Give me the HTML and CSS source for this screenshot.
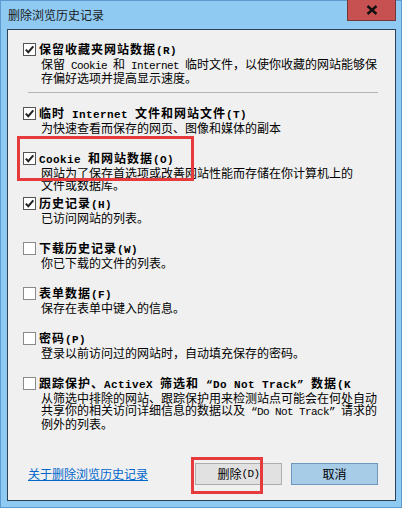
FILE: index.html
```html
<!DOCTYPE html>
<html lang="zh-CN">
<head>
<meta charset="utf-8">
<title>删除浏览历史记录</title>
<link rel="stylesheet" href="styles.css">
</head>
<body>
<div class="window">
  <div class="titlebar">
    <span class="title">删除浏览历史记录</span>
    <div class="close"><svg width="12" height="10" viewBox="0 0 12 10"><path d="M1.5 1 L10.5 9 M10.5 1 L1.5 9" stroke="#111" stroke-width="2.4" fill="none"/></svg></div>
  </div>
  <div class="client">
    <div class="options">
      <div class="item first">
        <span class="cb"><svg width="11" height="11" viewBox="0 0 11 11"><path d="M1.8 5.6 L4.3 8.2 L9.3 2.4" stroke="#222" stroke-width="2" fill="none"/></svg></span>
        <div class="text">
          <div class="label">保留收藏夹网站数据<span class="m">(R)</span></div>
          <div class="desc">保留<span class="m"> Cookie </span>和<span class="m"> Internet </span>临时文件，以使你收藏的网站能够保<br>存偏好选项并提高显示速度。</div>
        </div>
      </div>
      <div class="sep"></div>
      <div class="item">
        <span class="cb"><svg width="11" height="11" viewBox="0 0 11 11"><path d="M1.8 5.6 L4.3 8.2 L9.3 2.4" stroke="#222" stroke-width="2" fill="none"/></svg></span>
        <div class="text">
          <div class="label">临时<span class="m"> Internet </span>文件和网站文件<span class="m">(T)</span></div>
          <div class="desc">为快速查看而保存的网页、图像和媒体的副本</div>
        </div>
      </div>
      <div class="item">
        <span class="cb"><svg width="11" height="11" viewBox="0 0 11 11"><path d="M1.8 5.6 L4.3 8.2 L9.3 2.4" stroke="#222" stroke-width="2" fill="none"/></svg></span>
        <div class="text">
          <div class="label"><span class="m">Cookie </span>和网站数据<span class="m">(O)</span></div>
          <div class="desc">网站为了保存首选项或改善网站性能而存储在你计算机上的<br>文件或数据库。</div>
        </div>
      </div>
      <div class="item">
        <span class="cb"><svg width="11" height="11" viewBox="0 0 11 11"><path d="M1.8 5.6 L4.3 8.2 L9.3 2.4" stroke="#222" stroke-width="2" fill="none"/></svg></span>
        <div class="text">
          <div class="label">历史记录<span class="m">(H)</span></div>
          <div class="desc">已访问网站的列表。</div>
        </div>
      </div>
      <div class="item">
        <span class="cb off"></span>
        <div class="text">
          <div class="label">下载历史记录<span class="m">(W)</span></div>
          <div class="desc">你已下载的文件的列表。</div>
        </div>
      </div>
      <div class="item">
        <span class="cb off"></span>
        <div class="text">
          <div class="label">表单数据<span class="m">(F)</span></div>
          <div class="desc">保存在表单中键入的信息。</div>
        </div>
      </div>
      <div class="item">
        <span class="cb off"></span>
        <div class="text">
          <div class="label">密码<span class="m">(P)</span></div>
          <div class="desc">登录以前访问过的网站时，自动填充保存的密码。</div>
        </div>
      </div>
      <div class="item last">
        <span class="cb off"></span>
        <div class="text">
          <div class="label clip">跟踪保护、<span class="m">ActiveX </span>筛选和<span class="m"> “Do Not Track” </span>数据<span class="m">(K)</span></div>
          <div class="desc">从筛选中排除的网站、跟踪保护用来检测站点可能会在何处自动<br>共享你的相关访问详细信息的数据以及<span class="m"> “Do Not Track” </span>请求的<br>例外的列表。</div>
        </div>
      </div>
    </div>
    <div class="footer">
      <span class="link">关于删除浏览历史记录</span>
      <div class="btn btn-delete">删除<span class="m">(D)</span></div>
      <div class="btn btn-cancel">取消</div>
    </div>
    <div class="mark mark-cookie"></div>
    <div class="mark mark-delete"></div>
  </div>
</div>
</body>
</html>
```

FILE: styles.css
```css
html, body {
  margin: 0;
  padding: 0;
  background: #8fcaf3;
}
body {
  font-family: "Noto Sans CJK SC", "Noto Sans", sans-serif;
  font-size: 12px;
  color: #000;
}
.window {
  width: 402px;
  height: 508px;
  box-sizing: border-box;
  border: 1px solid #5b9bd0;
  background: #8fcaf3;
  padding: 0 5px 6px 6px;
  display: flex;
  flex-direction: column;
}
.titlebar {
  height: 28px;
  flex: none;
  display: flex;
  align-items: flex-start;
}
.title {
  padding: 7px 0 0 1px;
  line-height: 14px;
  color: #1a1a1a;
}
.close {
  margin-left: auto;
  margin-top: -1px;
  width: 49px;
  height: 21px;
  box-sizing: border-box;
  background: #c75050;
  border: 1px solid #70393a;
  border-top: none;
  display: flex;
  align-items: center;
  justify-content: center;
}
.client {
  flex: 1;
  position: relative;
  border: 1px solid #2d4257;
  background: #f0f0f0;
  display: flex;
  flex-direction: column;
}
.options {
  padding-top: 12px;
}
.item {
  display: flex;
  padding-left: 15px;
  height: 45px;
}
.item.first {
  height: 38px;
}
.cb {
  flex: none;
  width: 13px;
  height: 13px;
  box-sizing: border-box;
  border: 1px solid #555;
  background: #fff;
  margin: 1px 3px 0 0;
  display: flex;
}
.cb.off {
  border-color: #8a8a8a;
}
.label {
  font-weight: bold;
  line-height: 14px;
  letter-spacing: 1px;
  white-space: nowrap;
}
.label.clip {
  width: 312px;
  overflow: hidden;
}
.desc {
  line-height: 12px;
  padding-left: 2px;
  white-space: nowrap;
}
.m {
  font-family: "Liberation Mono", monospace;
  font-size: 11px;
  letter-spacing: -0.6px;
}
.label .m {
  letter-spacing: 0.4px;
}
.sep {
  width: 350px;
  height: 1px;
  background: #b4b4b4;
  margin: 12px 0 13px 20px;
}
.footer {
  margin-top: auto;
  padding: 0 17px 15px 20px;
  display: flex;
  align-items: center;
}
.link {
  color: #0066cc;
  text-decoration: underline;
  line-height: 14px;
}
.btn {
  width: 87px;
  height: 22px;
  box-sizing: border-box;
  border: 1px solid #adadad;
  background: #e1e1e1;
  display: flex;
  align-items: center;
  justify-content: center;
  line-height: 14px;
}
.btn-delete {
  margin-left: auto;
}
.btn-cancel {
  margin-left: 9px;
  background: #a7cce7;
  border-color: #6f96bb;
}
.mark {
  position: absolute;
  box-sizing: border-box;
  border: 3px solid #e63a3d;
}
.mark-cookie {
  left: 9px;
  top: 106px;
  width: 177px;
  height: 45px;
}
.mark-delete {
  left: 183px;
  top: 427px;
  width: 72px;
  height: 37px;
}
```
